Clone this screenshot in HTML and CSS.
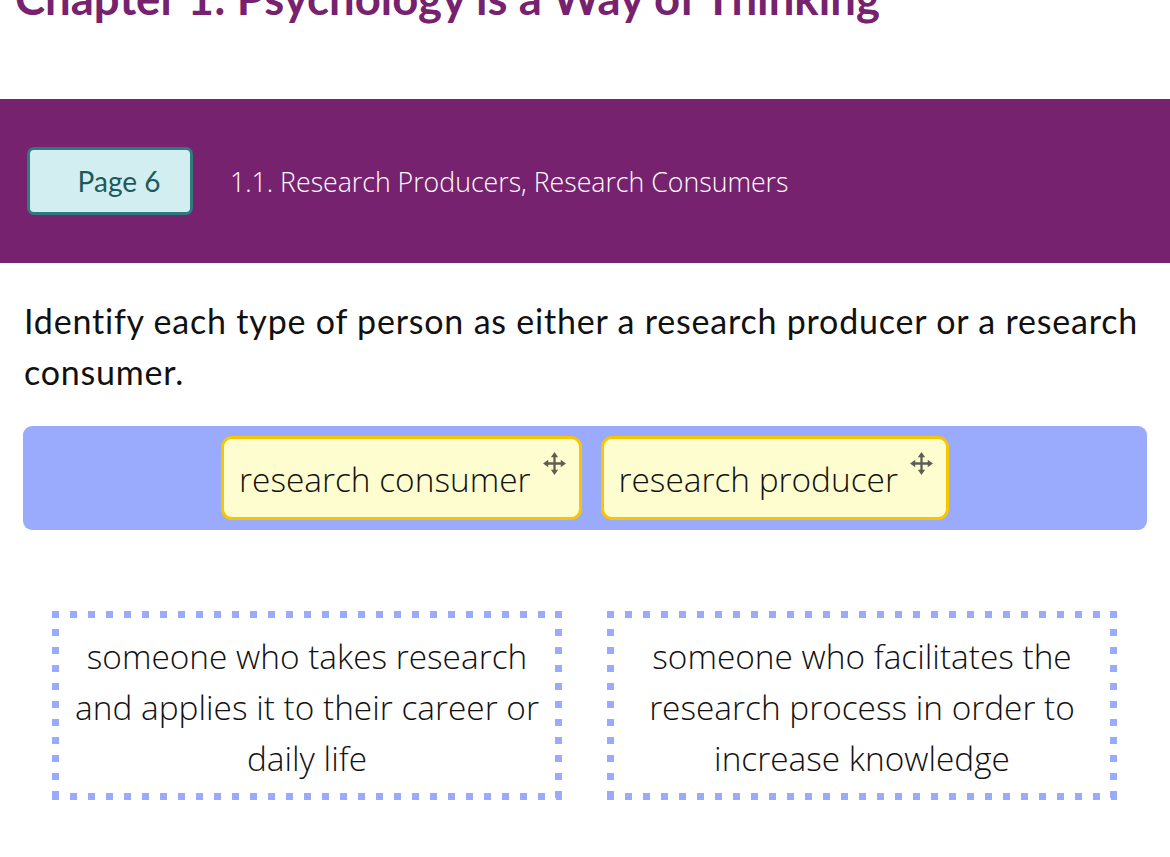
FILE: index.html
```html
<!DOCTYPE html>
<html lang="en">
<head>
<meta charset="utf-8">
<title>Chapter 1: Psychology is a Way of Thinking</title>
<link rel="stylesheet" href="styles.css">
</head>
<body>
<h1 class="chapter-title">Chapter 1: Psychology is a Way of Thinking</h1>
<header class="banner">
  <button class="page-btn">Page 6</button>
  <span class="section-title">1.1. Research Producers, Research Consumers</span>
</header>
<main class="activity">
  <p class="prompt">Identify each type of person as either a research producer or a research consumer.</p>
  <div class="chip-bank">
    <div class="chip">
      <span class="chip-label">research consumer</span>
      <svg class="move-icon" viewBox="0 0 24 24" aria-hidden="true">
        <path d="M12 3 V21 M3 12 H21" />
        <path class="head" d="M12 1 L8.5 6 H15.5 Z M12 23 L8.5 18 H15.5 Z M1 12 L6 8.5 V15.5 Z M23 12 L18 8.5 V15.5 Z" />
      </svg>
    </div>
    <div class="chip">
      <span class="chip-label">research producer</span>
      <svg class="move-icon" viewBox="0 0 24 24" aria-hidden="true">
        <path d="M12 3 V21 M3 12 H21" />
        <path class="head" d="M12 1 L8.5 6 H15.5 Z M12 23 L8.5 18 H15.5 Z M1 12 L6 8.5 V15.5 Z M23 12 L18 8.5 V15.5 Z" />
      </svg>
    </div>
  </div>
  <div class="zones">
    <div class="zone">someone who takes research and applies it to their career or daily life</div>
    <div class="zone">someone who facilitates the research process in order to increase knowledge</div>
  </div>
</main>
</body>
</html>
```

FILE: styles.css
```css
html, body {
  margin: 0;
  padding: 0;
  background: #ffffff;
}

body {
  font-family: "Lato", "Open Sans", "Liberation Sans", sans-serif;
  color: #111111;
  width: 1170px;
  overflow: hidden;
}

.chapter-title {
  margin: -28px 0 0 15px;
  height: 127px;
  font-size: 45.5px;
  line-height: 52px;
  font-weight: 700;
  color: #77226f;
  white-space: nowrap;
}

.banner {
  background: #77226f;
  height: 164px;
  display: flex;
  align-items: center;
  padding-left: 27px;
  gap: 37px;
  box-sizing: border-box;
}

.page-btn {
  width: 166px;
  height: 68px;
  background: #d3eef0;
  border: 3px solid #2e7b7e;
  border-radius: 7px;
  color: #1c5a5b;
  font-family: inherit;
  font-size: 28px;
  font-weight: 400;
  padding: 0 0 0 18px;
  box-sizing: border-box;
}

.section-title {
  color: #ffffff;
  font-family: "Open Sans", "Lato", sans-serif;
  font-size: 26.7px;
  font-weight: 300;
}

.activity {
  padding: 0 23px;
}

.prompt {
  margin: 32px 0 0 1px;
  font-size: 34px;
  line-height: 51px;
  letter-spacing: 0.8px;
  font-weight: 400;
  color: #111111;
}

.chip-bank {
  margin-top: 29px;
  background: #9aabfe;
  border-radius: 9px;
  height: 104px;
  display: flex;
  justify-content: center;
  align-items: center;
  gap: 19px;
}

.chip {
  display: flex;
  align-items: flex-start;
  height: 84px;
  box-sizing: border-box;
  background: #fefdd0;
  border: 3px solid #f7c600;
  border-radius: 11px;
  padding: 16px 12px 0 15px;
  gap: 11px;
}

.chip-label {
  font-family: "Open Sans", "Lato", sans-serif;
  font-size: 33.4px;
  line-height: 48px;
  font-weight: 300;
  color: #111111;
}

.move-icon {
  width: 25px;
  height: 25px;
  margin-top: -4px;
  fill: none;
  stroke: #5e5e52;
  stroke-width: 2.2;
}

.move-icon .head {
  fill: #5e5e52;
  stroke: none;
}

.zones {
  margin-top: 81px;
  display: flex;
  gap: 45px;
  padding: 0 30px 0 29px;
}

.zone {
  flex: 1;
  height: 189px;
  box-sizing: border-box;
  padding: 20px 12px 0;
  text-align: center;
  font-family: "Open Sans", "Lato", sans-serif;
  font-size: 33.4px;
  line-height: 51px;
  font-weight: 300;
  color: #111111;
  background:
    repeating-linear-gradient(90deg, #9aabfe 0 7px, transparent 7px 18px) left top / 100% 7px no-repeat,
    repeating-linear-gradient(90deg, #9aabfe 0 7px, transparent 7px 18px) left bottom / 100% 7px no-repeat,
    repeating-linear-gradient(180deg, #9aabfe 0 7px, transparent 7px 18px) left top / 7px 100% no-repeat,
    repeating-linear-gradient(180deg, #9aabfe 0 7px, transparent 7px 18px) right top / 7px 100% no-repeat;
}
```
